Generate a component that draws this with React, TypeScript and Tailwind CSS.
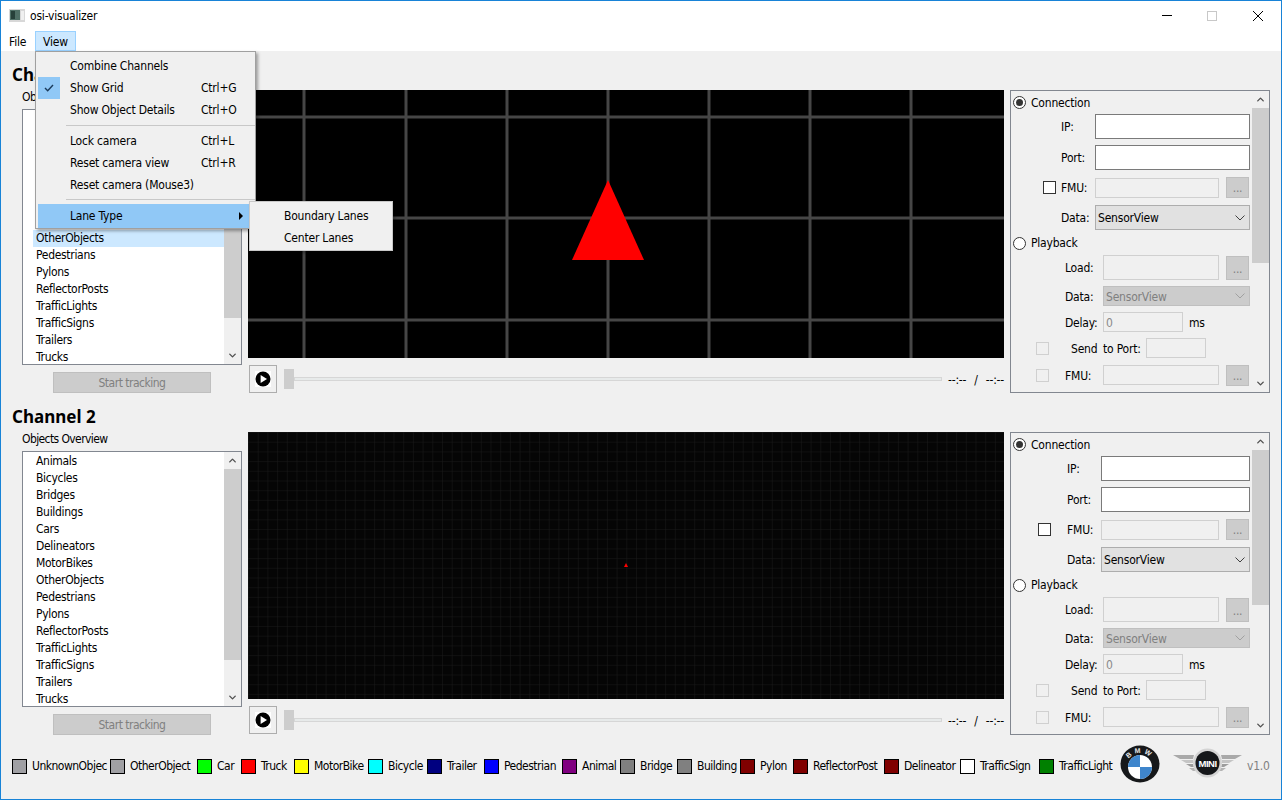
import React from 'react'
import { ChevronUp, ChevronDown } from 'lucide-react'

const objects = ['Animals', 'Bicycles', 'Bridges', 'Buildings', 'Cars', 'Delineators', 'MotorBikes', 'OtherObjects', 'Pedestrians', 'Pylons', 'ReflectorPosts', 'TrafficLights', 'TrafficSigns', 'Trailers', 'Trucks']

const legend = [
  { name: 'UnknownObjec', color: 'bg-[#a0a0a4]', width: 'w-[98px]' },
  { name: 'OtherObject', color: 'bg-[#a0a0a4]', width: 'w-[87px]' },
  { name: 'Car', color: 'bg-[#00ff00]', width: 'w-[44px]' },
  { name: 'Truck', color: 'bg-[#ff0000]', width: 'w-[53px]' },
  { name: 'MotorBike', color: 'bg-[#ffff00]', width: 'w-[74px]' },
  { name: 'Bicycle', color: 'bg-[#00ffff]', width: 'w-[59px]' },
  { name: 'Trailer', color: 'bg-[#000080]', width: 'w-[57px]' },
  { name: 'Pedestrian', color: 'bg-[#0000ff]', width: 'w-[78px]' },
  { name: 'Animal', color: 'bg-[#800080]', width: 'w-[58px]' },
  { name: 'Bridge', color: 'bg-[#808080]', width: 'w-[57px]' },
  { name: 'Building', color: 'bg-[#808080]', width: 'w-[63px]' },
  { name: 'Pylon', color: 'bg-[#800000]', width: 'w-[53px]' },
  { name: 'ReflectorPost', color: 'bg-[#800000]', width: 'w-[91px]' },
  { name: 'Delineator', color: 'bg-[#800000]', width: 'w-[76px]' },
  { name: 'TrafficSign', color: 'bg-white', width: 'w-[79px]' },
  { name: 'TrafficLight', color: 'bg-[#008000]', width: 'w-[81px]' },
]

function Scrollbar({ thumb }: { thumb: string }) {
  return (
    <div className="w-[17px] h-full flex flex-col items-center bg-[#f0f0f0] shrink-0">
      <div className="h-[17px] flex items-center justify-center"><ChevronUp size={11} strokeWidth={3} color="#505050" /></div>
      <div className={`w-full bg-[#cdcdcd] ${thumb}`} />
      <div className="flex-1" />
      <div className="h-[17px] flex items-center justify-center"><ChevronDown size={11} strokeWidth={3} color="#505050" /></div>
    </div>
  )
}

function ObjectList({ selected }: { selected?: boolean }) {
  return (
    <div className="ml-[10px] w-[220px] h-[256px] border border-[#828790] bg-white flex overflow-hidden">
      <div className="flex-1 pl-[10px] pt-[1px] overflow-hidden tracking-[-0.3px]">
        {objects.map((o) => (
          <div key={o} className={`h-[17px] leading-[17px] pl-[3px] ${selected && o === 'OtherObjects' ? 'bg-[#cce8ff]' : ''}`}>{o}</div>
        ))}
      </div>
      <Scrollbar thumb="h-[191px]" />
    </div>
  )
}

function Input({ cls }: { cls: string }) {
  return <div className={`border border-[#7a7a7a] bg-white shrink-0 ${cls}`} />
}

function Disabled({ cls, text }: { cls: string; text?: string }) {
  return <div className={`border border-[#d0d0d0] bg-[#f0f0f0] shrink-0 pl-[2px] text-[#8a8a8a] leading-[20px] ${cls}`}>{text}</div>
}

function Dots({ tall }: { tall?: boolean }) {
  return <div className={`ml-[7px] w-[23px] bg-[#cccccc] border border-[#bfbfbf] text-[#808080] text-center shrink-0 ${tall ? 'h-[24px] leading-[24px]' : 'h-[21px] leading-[20px]'}`}>...</div>
}

function Radio({ on }: { on?: boolean }) {
  return (
    <div className="w-[13px] h-[13px] rounded-full border border-[#333] bg-white flex items-center justify-center shrink-0">
      {on && <div className="w-[7px] h-[7px] rounded-full bg-[#333]" />}
    </div>
  )
}

function ChevronSmall({ color }: { color: string }) {
  return (
    <svg width="10" height="6" viewBox="0 0 10 6" className="absolute right-[4px] top-1/2 -mt-[3px]">
      <path d="M0.5 0.5 L5 5 L9.5 0.5" fill="none" stroke={color} strokeWidth="1" />
    </svg>
  )
}

function ConfigPanel({ second }: { second?: boolean }) {
  const labelCol = second ? 'w-[34px] ml-[56px]' : 'w-[34px] ml-[50px]'
  const inputW = second ? 'w-[149px]' : 'w-[155px]'
  const fmuW = second ? 'w-[118px]' : 'w-[124px]'
  const playLabel = 'w-[38px] ml-[54px] pt-[1px]'
  return (
    <div className="w-[260px] h-[303px] border border-[#828790] flex overflow-hidden">
      <div className="flex-1 relative overflow-hidden">
        <div className="h-[23px] flex items-center pl-[2px] gap-[5px]"><Radio on /><span>Connection</span></div>
        <div className="h-[25px] flex items-center mb-[6px]"><div className={labelCol}>IP:</div><Input cls={`h-[25px] ${inputW}`} /></div>
        <div className="h-[25px] flex items-center mb-[7px]"><div className={labelCol}>Port:</div><Input cls={`h-[25px] ${inputW}`} /></div>
        <div className="h-[21px] flex items-center mb-[7px]">
          <div className={`w-[13px] h-[13px] border border-[#333] bg-white shrink-0 ${second ? 'ml-[27px]' : 'ml-[32px]'}`} />
          <div className={`w-[34px] ${second ? 'ml-[16px]' : 'ml-[5px]'}`}>FMU:</div>
          <Disabled cls={`h-[20px] ${fmuW}`} />
          <Dots />
        </div>
        <div className="h-[25px] flex items-center">
          <div className={labelCol}>Data:</div>
          <div className={`relative h-[25px] ${inputW} border border-[#adadad] bg-[#e1e1e1] pl-[2px] leading-[24px] shrink-0`}>SensorView<ChevronSmall color="#404040" /></div>
        </div>
        <div className="h-[24px] flex items-center pl-[2px] gap-[5px] mt-[1px]"><Radio /><span>Playback</span></div>
        <div className="h-[25px] flex items-center mb-[6px]">
          <div className={playLabel}>Load:</div>
          <Disabled cls="h-[25px] w-[116px]" />
          <Dots tall />
        </div>
        <div className="h-[20px] flex items-center mb-[6px]">
          <div className={playLabel}>Data:</div>
          <div className="relative h-[20px] w-[147px] border border-[#bfbfbf] bg-[#cccccc] pl-[2px] leading-[20px] text-[#808080] shrink-0">SensorView<ChevronSmall color="#a0a0a0" /></div>
        </div>
        <div className="h-[20px] flex items-center mb-[6px]">
          <div className={playLabel}>Delay:</div>
          <Disabled cls="h-[20px] w-[80px]" text="0" />
          <span className="ml-[6px] pt-[1px]">ms</span>
        </div>
        <div className="h-[20px] flex items-center mb-[7px]">
          <div className="w-[13px] h-[13px] border border-[#d0d0d0] bg-[#f0f0f0] ml-[25px] shrink-0" />
          <div className="ml-[22px] w-[32px] pt-[1px]">Send</div>
          <div className="w-[43px] pt-[1px]">to Port:</div>
          <Disabled cls="h-[20px] w-[60px]" />
        </div>
        <div className="h-[20px] flex items-center">
          <div className="w-[13px] h-[13px] border border-[#d0d0d0] bg-[#f0f0f0] ml-[25px] shrink-0" />
          <div className="ml-[16px] w-[38px] pt-[1px]">FMU:</div>
          <Disabled cls="h-[20px] w-[116px]" />
          <Dots />
        </div>
      </div>
      <Scrollbar thumb="h-[155px]" />
    </div>
  )
}

function PlayBar() {
  return (
    <div className="h-[28px] flex items-center pl-[1px]">
      <div className="w-[28px] h-[28px] border border-[#adadad] bg-[#f0f0f0] flex items-center justify-center shrink-0">
        <svg width="16" height="16" viewBox="0 0 16 16">
          <rect width="16" height="16" fill="#fff" />
          <circle cx="8" cy="8" r="7.5" fill="#000" />
          <path d="M5.6 4 L12 8 L5.6 12 Z" fill="#fff" />
        </svg>
      </div>
      <div className="ml-[7px] w-[10px] h-[20px] bg-[#cdcdcd] shrink-0" />
      <div className="w-[648px] h-[4px] bg-[#e7eaea] border border-[#d6d6d6] shrink-0" />
      <div className="ml-[6px] flex-1 flex justify-between whitespace-nowrap text-[#000] pt-[2px]">
        <span>--:--</span><span>/</span><span>--:--</span>
      </div>
    </div>
  )
}

function GridView() {
  const xs = [56, 158, 259, 360, 461, 562, 663]
  const ys = [27, 128, 230]
  return (
    <svg width="756" height="268" viewBox="0 0 756 268" className="block bg-black">
      {xs.map((x) => <rect key={x} x={x - 1.5} y="0" width="3" height="268" fill="#464646" />)}
      {ys.map((y) => <rect key={y} x="0" y={y - 1.5} width="756" height="3" fill="#464646" />)}
      <path d="M360 90 L396 170 L324 170 Z" fill="#ff0000" />
    </svg>
  )
}

function FineGridView() {
  return (
    <svg width="756" height="267" viewBox="0 0 756 267" className="block bg-black">
      <defs>
        <pattern id="fine" width="9.7" height="9.7" patternUnits="userSpaceOnUse">
          <path d="M9.7 0 L0 0 L0 9.7" fill="none" stroke="#1a1a1a" strokeWidth="1" />
        </pattern>
      </defs>
      <rect width="756" height="267" fill="#050505" />
      <rect width="756" height="267" fill="url(#fine)" />
      <path d="M378 131 L380 135 L376 135 Z" fill="#ff0000" />
    </svg>
  )
}

function Channel({ title, second }: { title: string; second?: boolean }) {
  return (
    <div className="flex pl-[11px] mb-[13px]">
      <div className="w-[236px] shrink-0">
        <div className="h-[26px] text-[17px] font-bold leading-[22px] font-['Noto_Sans',sans-serif] [font-stretch:normal] tracking-normal">{title}</div>
        <div className="h-[19px] ml-[10px] leading-[14px] tracking-[-0.6px]">Objects Overview</div>
        <ObjectList selected={!second} />
        <div className="mt-[7px] ml-[41px] w-[158px] h-[21px] bg-[#cccccc] border border-[#bfbfbf] text-[#808080] text-center leading-[21px] tracking-[-0.5px]">Start tracking</div>
      </div>
      <div className="w-[756px] shrink-0 pt-[26px] flex flex-col gap-[7px]">
        {second ? <FineGridView /> : <GridView />}
        <PlayBar />
      </div>
      <div className="ml-[6px] pt-[26px]">
        <ConfigPanel second={second} />
      </div>
    </div>
  )
}

function BmwLogo() {
  return (
    <svg width="40" height="38" viewBox="0 0 40 38" className="shrink-0 -mt-[5px]">
      <ellipse cx="20" cy="19" rx="19.5" ry="18.5" fill="#16181a" />
      <circle cx="20" cy="22" r="12" fill="#fff" />
      <path d="M20 10 A12 12 0 0 0 8 22 L20 22 Z" fill="#3f86cc" />
      <path d="M20 34 A12 12 0 0 0 32 22 L20 22 Z" fill="#3f86cc" />
      <defs><path id="bmwArc" d="M6 22 A14 14 0 0 1 34 22" /></defs>
      <text fontSize="7" fontWeight="700" fill="#e8e8e8" fontFamily="Liberation Sans, sans-serif">
        <textPath href="#bmwArc" startOffset="50%" textAnchor="middle" letterSpacing="3">BMW</textPath>
      </text>
    </svg>
  )
}

function MiniLogo() {
  return (
    <svg width="69" height="30" viewBox="0 0 69 30" className="shrink-0">
      <path d="M0 7 L21 7 L20 11 L7 11 Z" fill="#a9a9a9" />
      <path d="M8 12 L20 12 L20 15 L13 15 Z" fill="#c4c4c4" />
      <path d="M13 16 L20 16 L21 19 L18 19 Z" fill="#9c9c9c" />
      <path d="M16 20 L22 20 L24 23 L20 23 Z" fill="#b4b4b4" />
      <path d="M69 7 L48 7 L49 11 L62 11 Z" fill="#a9a9a9" />
      <path d="M61 12 L49 12 L49 15 L56 15 Z" fill="#c4c4c4" />
      <path d="M56 16 L49 16 L48 19 L51 19 Z" fill="#9c9c9c" />
      <path d="M53 20 L47 20 L45 23 L49 23 Z" fill="#b4b4b4" />
      <circle cx="34.5" cy="15" r="14.5" fill="#d4d4d4" />
      <circle cx="34.5" cy="15" r="12" fill="#15171a" />
      <text x="34.5" y="18.5" textAnchor="middle" fontSize="9.5" fontWeight="700" fill="#fff" fontFamily="Liberation Sans, sans-serif">MINI</text>
    </svg>
  )
}

function MenuRow({ label, shortcut, checked }: { label: string; shortcut?: string; checked?: boolean }) {
  return (
    <div className="h-[22px] flex items-center relative">
      {checked && (
        <div className="absolute left-[2px] top-0 w-[22px] h-[22px] bg-[#90c8f6] flex items-center justify-center">
          <svg width="10" height="8" viewBox="0 0 10 8"><path d="M1 4 L3.7 6.7 L9 1" fill="none" stroke="#1a3a5a" strokeWidth="1.4" /></svg>
        </div>
      )}
      <span className="ml-[34px]">{label}</span>
      {shortcut && <span className="absolute left-[165px]">{shortcut}</span>}
    </div>
  )
}

export default function App() {
  return (
    <div className="relative w-[1282px] h-[800px] border border-[#1883d7] bg-[#f0f0f0] text-[12px] text-black overflow-hidden flex flex-col font-['DejaVu_Sans',sans-serif] [font-stretch:condensed] tracking-[-0.2px]">
      <div className="h-[29px] bg-white flex items-center shrink-0">
        <svg width="16" height="13" viewBox="0 0 16 13" className="ml-[8px]">
          <rect width="16" height="13" fill="#d8d8d8" />
          <rect x="1" y="1" width="10" height="10" fill="#4f6f66" />
          <rect x="2" y="2" width="4" height="8" fill="#27403a" />
          <rect x="12" y="2" width="3" height="9" fill="#f0f0f0" />
        </svg>
        <span className="ml-[5px]">osi-visualizer</span>
        <div className="ml-auto flex items-center">
          <div className="w-[10px] h-[1px] bg-black mr-[35px]" />
          <div className="w-[10px] h-[10px] border border-[#c8c8c8] mr-[36px]" />
          <svg width="10" height="10" viewBox="0 0 10 10" className="mr-[18px]"><path d="M0 0 L10 10 M10 0 L0 10" stroke="#000" strokeWidth="1" /></svg>
        </div>
      </div>
      <div className="h-[21px] bg-white flex items-center shrink-0 pl-[2px]">
        <div className="w-[32px] pl-[6px] h-[20px] leading-[22px]">File</div>
        <div className="w-[41px] pl-[7px] h-[20px] leading-[20px] bg-[#cce8ff] border border-[#99d1ff]">View</div>
      </div>
      <div className="flex-1 pt-[13px]">
        <Channel title="Channel 1" />
        <Channel title="Channel 2" second />
        <div className="flex items-center pl-[11px] mt-[-2px] h-[40px] tracking-[-0.5px]">
          {legend.map((l) => (
            <div key={l.name + l.width} className={`flex items-center shrink-0 ${l.width}`}>
              <div className={`w-[15px] h-[15px] border border-black shrink-0 ${l.color}`} />
              <span className="ml-[5px] whitespace-nowrap">{l.name}</span>
            </div>
          ))}
          <BmwLogo />
          <div className="ml-[13px] -mt-[6px]"><MiniLogo /></div>
          <span className="ml-[5px] text-[#808080] tracking-[-0.2px]">v1.0</span>
        </div>
      </div>

      {/* open View menu */}
      <div className="absolute left-[34px] top-[50px] w-[221px] h-[178px] bg-[#f0f0f0] border border-[#a0a0a0] shadow-[2px_2px_3px_rgba(0,0,0,0.35)] pt-[3px] flex flex-col">
        <MenuRow label="Combine Channels" />
        <MenuRow label="Show Grid" shortcut="Ctrl+G" checked />
        <MenuRow label="Show Object Details" shortcut="Ctrl+O" />
        <div className="h-[1px] bg-[#c8c8c8] ml-[30px] my-[4px]" />
        <MenuRow label="Lock camera" shortcut="Ctrl+L" />
        <MenuRow label="Reset camera view" shortcut="Ctrl+R" />
        <MenuRow label="Reset camera (Mouse3)" />
        <div className="h-[1px] bg-[#c8c8c8] ml-[30px] mt-[3px] mb-[4px]" />
        <div className="h-[24px] mx-[2px] bg-[#90c8f6] flex items-center relative">
          <span className="ml-[32px]">Lane Type</span>
          <div className="absolute right-[10px] top-[8px] w-0 h-0 border-y-[4px] border-y-transparent border-l-[4px] border-l-black" />
        </div>
      </div>
      <div className="absolute left-[248px] top-[200px] w-[144px] h-[50px] bg-[#f0f0f0] border border-[#c8c8c8] shadow-[2px_2px_3px_rgba(0,0,0,0.35)] pt-[3px]">
        <div className="h-[22px] leading-[22px] pl-[34px]">Boundary Lanes</div>
        <div className="h-[22px] leading-[22px] pl-[34px]">Center Lanes</div>
      </div>
    </div>
  )
}
